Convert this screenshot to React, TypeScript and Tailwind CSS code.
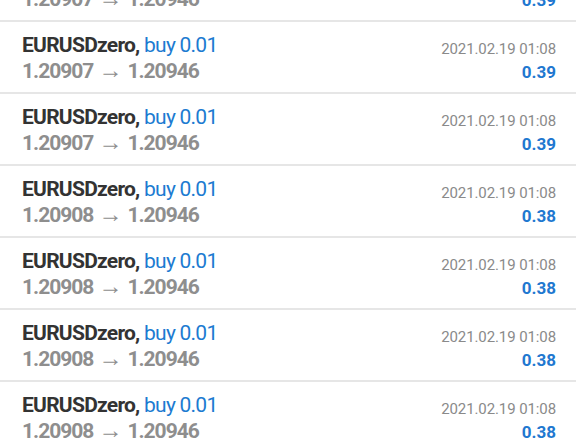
const rows = [
  { open: "1.20907", close: "1.20946", profit: "0.39" },
  { open: "1.20907", close: "1.20946", profit: "0.39" },
  { open: "1.20907", close: "1.20946", profit: "0.39" },
  { open: "1.20908", close: "1.20946", profit: "0.38" },
  { open: "1.20908", close: "1.20946", profit: "0.38" },
  { open: "1.20908", close: "1.20946", profit: "0.38" },
  { open: "1.20908", close: "1.20946", profit: "0.38" },
];

export default function App() {
  return (
    <div className="h-[440px] w-[576px] overflow-hidden bg-white font-['Roboto',sans-serif]">
      <div className="-mt-[50px]">
        {rows.map((r, i) => (
          <div key={i} className="flex h-[72px] justify-between border-b-2 border-[#e6e6e6] pl-[22px] pr-[20px]">
            <div className="pt-[11px]">
              <div className="text-[21px] leading-[25px] tracking-[-0.75px]">
                <span className="font-bold text-[#333333]">EURUSDzero,</span>{" "}
                <span className="text-[#1c7bd1]">buy 0.01</span>
              </div>
              <div className="flex items-baseline text-[21px] leading-[25px] font-bold tracking-[-1px] text-[#8e8e8e]">
                <span>{r.open}</span>
                <span className="mx-[5px] inline-block -translate-y-[0px] text-[24px] font-normal tracking-normal">→</span>
                <span>{r.close}</span>
              </div>
            </div>
            <div className="flex flex-col items-end pt-[17px]">
              <div className="text-[15px] leading-[20px] tracking-[-0.1px] text-[#8a8a8a]">2021.02.19 01:08</div>
              <div className="mt-[1px] text-[17px] leading-[25px] font-bold text-[#1f78d0]">{r.profit}</div>
            </div>
          </div>
        ))}
      </div>
    </div>
  );
}
